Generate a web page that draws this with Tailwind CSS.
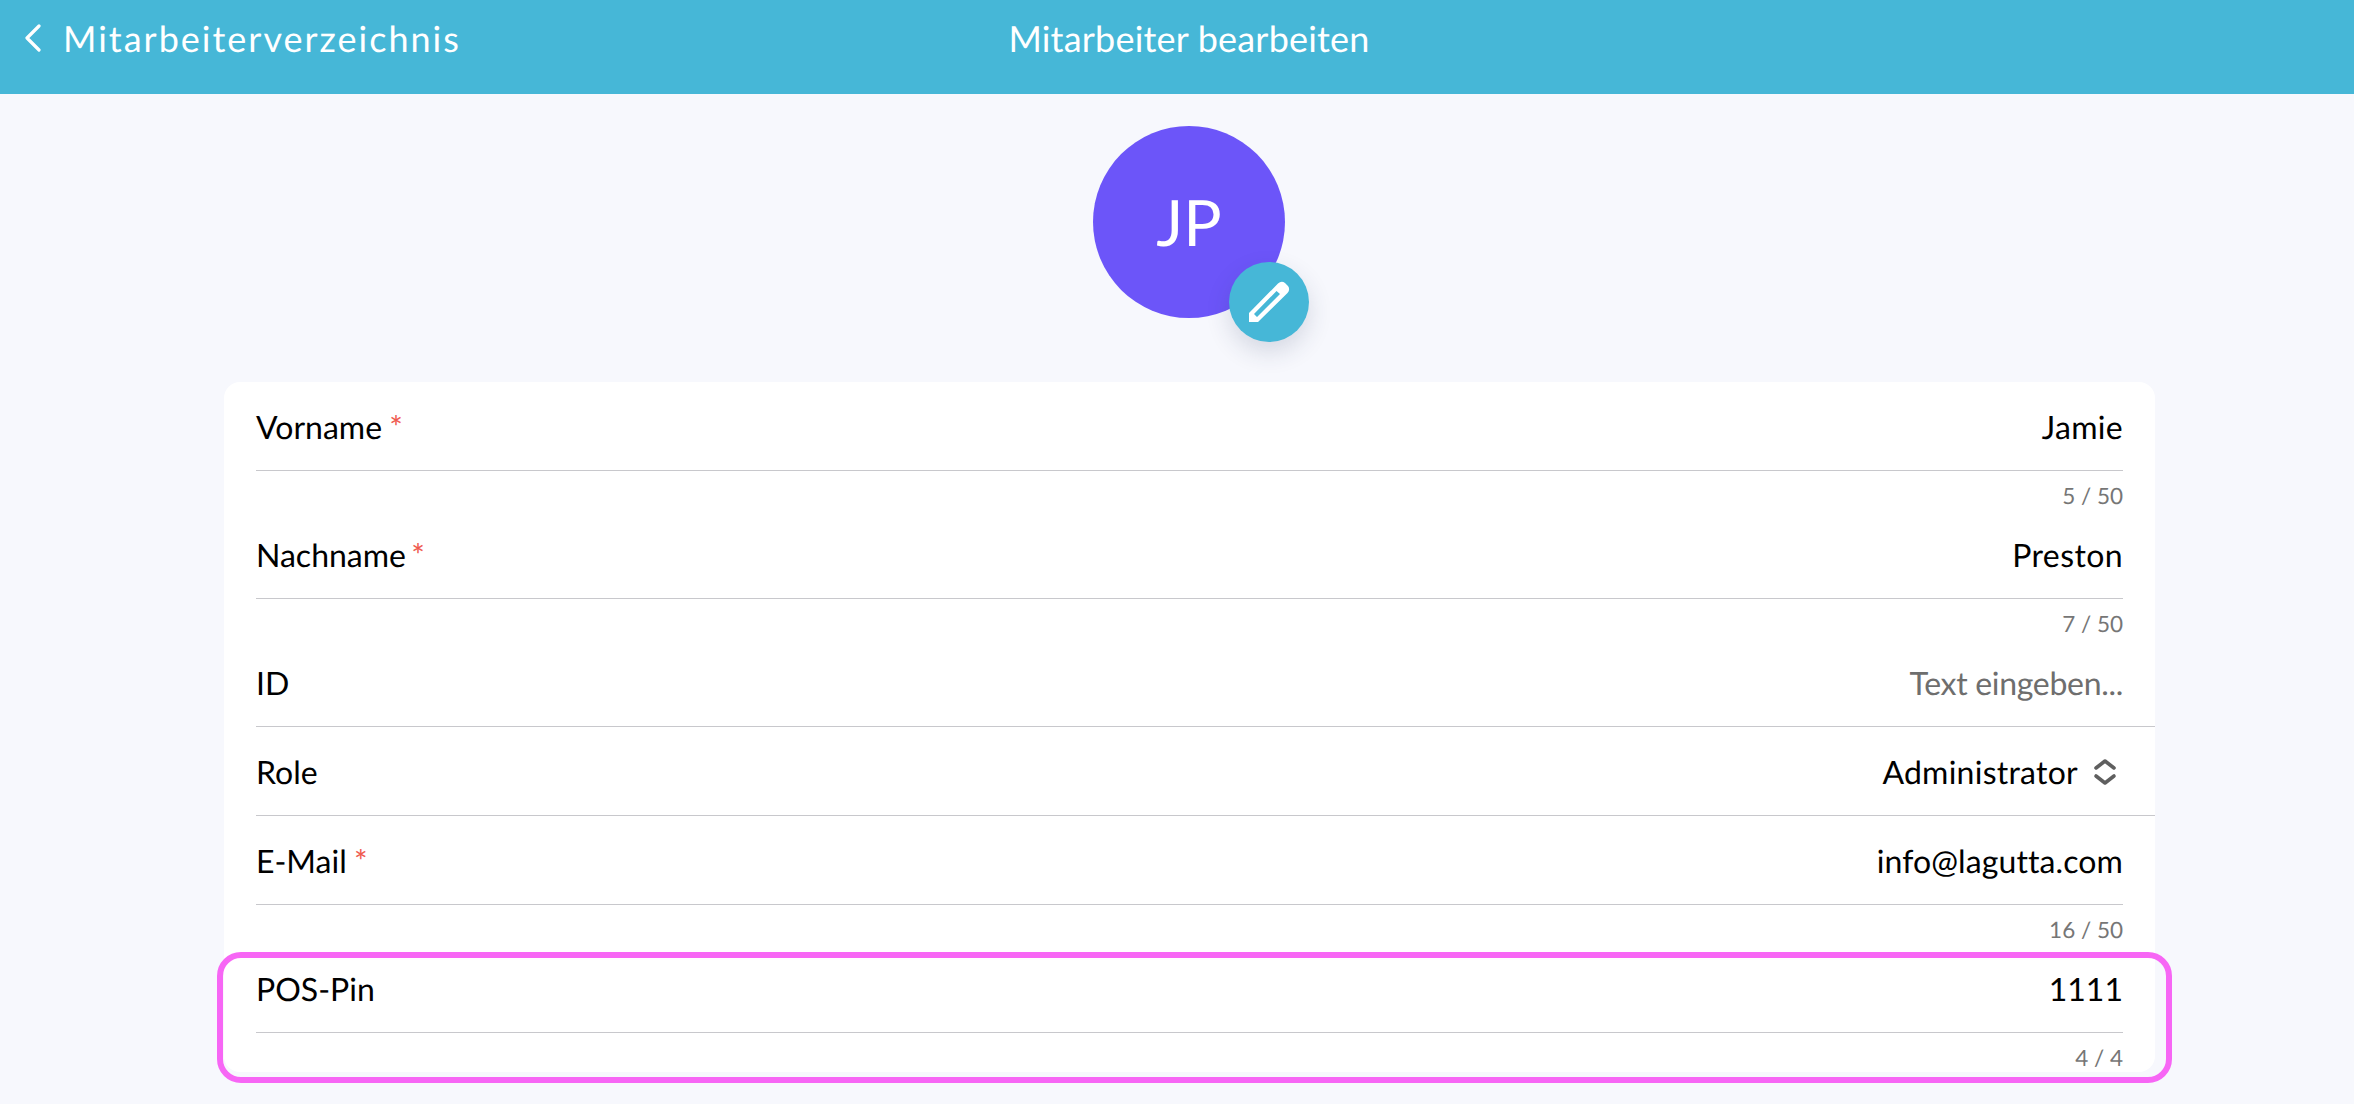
<!DOCTYPE html>
<html lang="de">

<head>
    <meta charset="UTF-8">
    <title>Mitarbeiter bearbeiten</title>
    <script src="https://cdn.jsdelivr.net/npm/@tailwindcss/browser@4"></script>
</head>

<body class="bg-[#f7f8fd] text-black font-['Lato',sans-serif] h-[1104px] overflow-hidden antialiased [text-rendering:geometricPrecision]">

    <!-- Header -->
    <header class="h-[94px] bg-[#46b7d7] text-white grid grid-cols-[1fr_auto_1fr] items-center pl-[24px] pb-[19px]">
        <div class="flex items-center">
            <svg class="w-[18px] h-[28px]" viewBox="0 0 18 28" fill="none" stroke="currentColor" stroke-width="3.2" stroke-linecap="round" stroke-linejoin="round">
                <path d="M15 2 L3 14 L15 26" />
            </svg>
            <span class="ml-[21px] text-[36px] font-normal tracking-[2px]">Mitarbeiterverzeichnis</span>
        </div>
        <div class="text-[36px] font-normal tracking-[0.2px]">Mitarbeiter bearbeiten</div>
        <div></div>
    </header>

    <main class="pl-[224px] pr-[199px]">
        <!-- Avatar -->
        <div class="h-[288px] flex justify-center pt-[32px] pr-[1px]">
            <div class="relative w-[192px] h-[192px] rounded-full bg-[#6c55f9] text-white flex items-center justify-center">
                <span class="text-[64px] font-normal">JP</span>
                <div class="absolute left-[136px] top-[136px] w-[80px] h-[80px] rounded-full bg-[#46b7d7] shadow-[0_10px_24px_rgba(40,50,90,0.16)] flex items-center justify-center">
                    <svg class="w-[68px] h-[68px]" viewBox="0 0 68 68" fill="white" fill-rule="evenodd">
                        <path d="M14 45 L43 15.5 Q46.5 12.5 50 15 L53 18 Q55.5 21.5 52.5 25 L23 54 L14 54 Z M19 46 L22 49 L45 26 L41.5 23 Z" />
                    </svg>
                </div>
            </div>
        </div>

        <!-- Form card -->
        <div class="bg-white rounded-[16px] text-[32px]">

            <div class="px-[32px]">
                <div class="h-[89px] pt-[2px] border-b border-[#c8c8cc] flex items-center justify-between">
                    <div>Vorname <span class="text-[#ef5a50] -ml-[1px]">*</span></div>
                    <div class="tracking-[0.3px]">Jamie</div>
                </div>
                <div class="h-[39px] pt-[10px] flex items-center justify-end text-[22.5px] text-[#767676]">5 / 50</div>
            </div>

            <div class="px-[32px]">
                <div class="h-[89px] pt-[2px] border-b border-[#c8c8cc] flex items-center justify-between">
                    <div>Nachname <span class="text-[#ef5a50] -ml-[3px]">*</span></div>
                    <div class="tracking-[0.4px]">Preston</div>
                </div>
                <div class="h-[39px] pt-[10px] flex items-center justify-end text-[22.5px] text-[#767676]">7 / 50</div>
            </div>

            <div class="pl-[32px]">
                <div class="h-[89px] pt-[2px] border-b border-[#c8c8cc] flex items-center justify-between pr-[32px]">
                    <div>ID</div>
                    <div class="text-[#6e6e6e] tracking-[-0.3px]">Text eingeben...</div>
                </div>
            </div>

            <div class="pl-[32px]">
                <div class="h-[89px] pt-[2px] border-b border-[#c8c8cc] flex items-center justify-between pr-[32px]">
                    <div>Role</div>
                    <div class="flex items-center">
                        <span class="tracking-[0.25px]">Administrator</span>
                        <svg class="w-[24px] h-[28px] ml-[15px] mr-[6px]" viewBox="0 0 24 28" fill="none" stroke="#5f5f5f" stroke-width="3.6" stroke-linecap="round" stroke-linejoin="round">
                            <path d="M3 10 L12 3 L21 10" />
                            <path d="M3 18 L12 25 L21 18" />
                        </svg>
                    </div>
                </div>
            </div>

            <div class="px-[32px]">
                <div class="h-[89px] pt-[2px] border-b border-[#c8c8cc] flex items-center justify-between">
                    <div>E-Mail <span class="text-[#ef5a50] -ml-[1px]">*</span></div>
                    <div class="tracking-[0.1px]">info@lagutta.com</div>
                </div>
                <div class="h-[39px] pt-[10px] flex items-center justify-end text-[22.5px] text-[#767676]">16 / 50</div>
            </div>

            <div class="relative px-[32px]">
                <div class="h-[89px] pt-[2px] border-b border-[#c8c8cc] flex items-center justify-between">
                    <div>POS-Pin</div>
                    <div>1111</div>
                </div>
                <div class="h-[39px] pt-[10px] flex items-center justify-end text-[22.5px] text-[#767676]">4 / 4</div>
                <!-- Highlight frame -->
                <div class="absolute -left-[7px] -right-[17px] top-[8px] -bottom-[11px] border-[6px] border-[#f766f5] rounded-[24px]"></div>
            </div>

        </div>
    </main>

</body>
</html>
